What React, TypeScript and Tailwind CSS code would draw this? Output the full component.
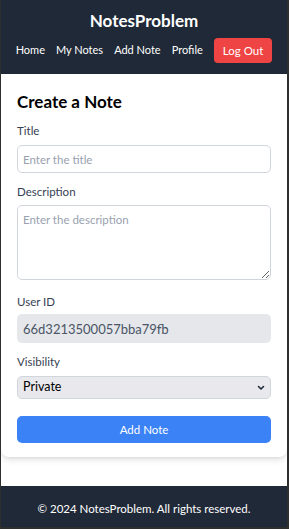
import React from 'react';

const font = { fontFamily: 'Lato, "Liberation Sans", sans-serif' };

export default function App() {
  return (
    <div
      className="flex h-[529px] flex-col overflow-hidden border-b-2 border-l border-r-2 border-[#2f2f2f] bg-white"
      style={font}
    >
      {/* Header */}
      <header className="h-[74px] shrink-0 bg-[#1f2937] pt-[7px] text-white">
        <h1 className="h-[28px] text-center text-[17px] leading-[28px] font-bold">NotesProblem</h1>
        <nav className="mt-[3px] flex items-center justify-center gap-[11px] text-[11px]">
          <a href="#">Home</a>
          <a href="#">My Notes</a>
          <a href="#">Add Note</a>
          <a href="#">Profile</a>
          <button className="h-[25px] rounded bg-[#ef4444] px-[9px] text-[11.5px] text-white">Log Out</button>
        </nav>
      </header>

      {/* Main */}
      <main className="flex-1">
        <div className="rounded-b-lg bg-white px-4 pt-4 pb-[14px] shadow-md">
          <h2 className="mb-[9px] text-[17px] leading-[24px] font-bold text-black">Create a Note</h2>

          <label className="mb-[6px] block text-[11.5px] leading-4 text-gray-700">Title</label>
          <input
            type="text"
            placeholder="Enter the title"
            className="mb-[11px] block h-[28px] w-full rounded-[5px] border border-gray-300 px-[5px] text-[11.5px] placeholder:text-gray-400"
          />

          <label className="mb-[5px] block text-[11.5px] leading-4 text-gray-700">Description</label>
          <textarea
            placeholder="Enter the description"
            className="mb-[14px] block h-[75px] w-full rounded-[5px] border border-gray-300 px-[5px] pt-[5px] text-[11.5px] placeholder:text-gray-400"
          />

          <label className="mb-[4px] block text-[11.5px] leading-4 text-gray-700">User ID</label>
          <input
            type="text"
            readOnly
            value="66d3213500057bba79fb"
            className="mb-[11px] block h-[29px] w-full rounded-[5px] bg-gray-200 px-[6px] text-[13px] text-gray-600"
          />

          <label className="mb-[6px] block text-[11.5px] leading-4 text-gray-700">Visibility</label>
          <div className="relative mb-[17px]">
            <select className="block h-[23px] w-full appearance-none rounded-[5px] border border-gray-300 bg-[#e9e9ed] px-[5px] text-[12.5px] text-black">
              <option>Private</option>
              <option>Public</option>
            </select>
            <svg
              className="pointer-events-none absolute top-[9px] right-[6px] h-[6px] w-[8px] text-gray-800"
              viewBox="0 0 8 6"
              fill="none"
              stroke="currentColor"
              strokeWidth={1.6}
              strokeLinecap="round"
              strokeLinejoin="round"
            >
              <path d="M1.5 1.5 4 4l2.5-2.5" />
            </svg>
          </div>

          <button className="block h-[27px] w-full rounded-[5px] bg-[#3b82f6] text-[11.5px] text-white">Add Note</button>
        </div>
      </main>

      {/* Footer */}
      <footer className="h-[41px] shrink-0 bg-[#1f2937] pt-[15px] text-center text-[11.5px] leading-4 text-white">
        © 2024 NotesProblem. All rights reserved.
      </footer>
    </div>
  );
}
